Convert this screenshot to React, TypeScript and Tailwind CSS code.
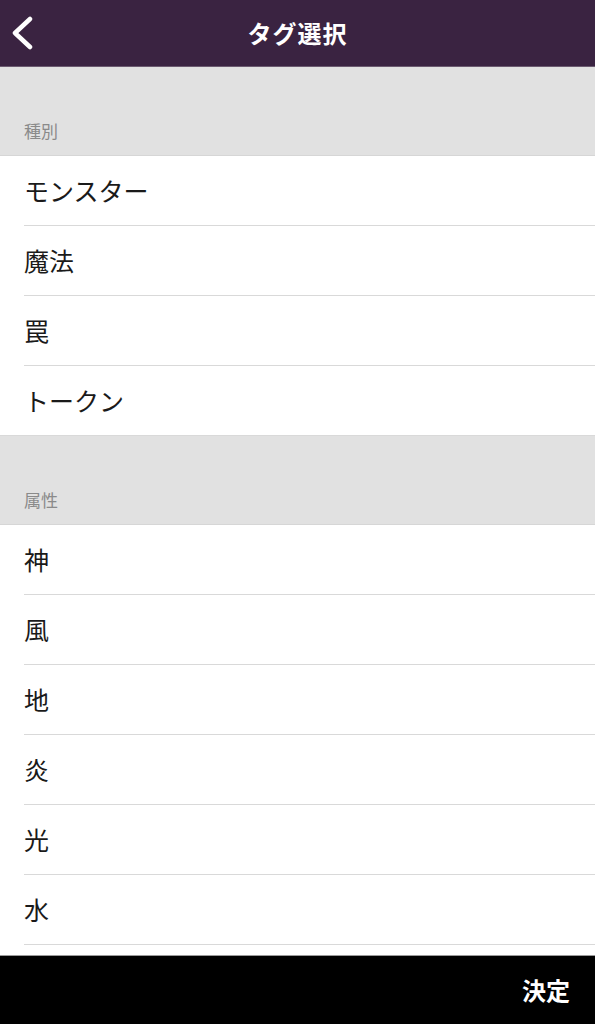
import React from "react";

const sections = [
  { title: "種別", items: ["モンスター", "魔法", "罠", "トークン"] },
  { title: "属性", items: ["神", "風", "地", "炎", "光", "水", "闇"] },
];

const BackIcon = () => (
  <svg width="24" height="34" viewBox="0 0 24 34" fill="none">
    <path d="M20 3 L5 17 L20 31" stroke="white" strokeWidth="4.5" strokeLinecap="round" strokeLinejoin="round" />
  </svg>
);

const App = () => {
  return (
    <div className="w-full min-h-screen bg-white">
      <div className="font-['Noto_Sans_CJK_JP','Noto_Sans',sans-serif]">
        <header className="relative h-[67px] bg-[#3a2341] border-b border-[#6b5a70] flex items-center justify-center">
          <button className="absolute left-[10px] top-[16px]">
            <BackIcon />
          </button>
          <h1 className="text-white text-[24px] font-bold tracking-[1px]">タグ選択</h1>
        </header>

        <main className="pb-[69px]">
          {sections.map((section) => (
            <section key={section.title}>
              <div className="h-[89px] bg-[#e1e1e1] flex items-end px-6 pb-[12px] border-b border-[#d6d6d6]">
                <span className="text-[#8a8a8a] text-[17px]">{section.title}</span>
              </div>
              <ul>
                {section.items.map((item, i) => (
                  <li
                    key={item}
                    className={
                      i === section.items.length - 1
                        ? "h-[70px] flex items-center px-6 border-b border-[#d9d9d9]"
                        : "h-[70px] pl-6"
                    }
                  >
                    {i === section.items.length - 1 ? (
                      <span className="text-[25px] text-[#1a1a1a]">{item}</span>
                    ) : (
                      <div className="h-full flex items-center border-b border-[#d9d9d9]">
                        <span className="text-[25px] text-[#1a1a1a]">{item}</span>
                      </div>
                    )}
                  </li>
                ))}
              </ul>
            </section>
          ))}
        </main>

        <footer className="fixed bottom-0 left-0 right-0 h-[69px] bg-black border-t border-[#9a9a9a] flex items-center justify-end px-[25px]">
          <button className="text-white text-[24px] font-bold">決定</button>
        </footer>
      </div>
    </div>
  );
};

export default App;
